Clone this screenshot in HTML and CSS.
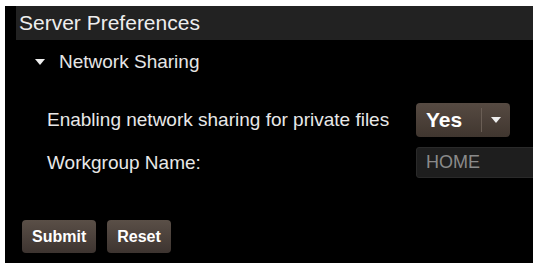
FILE: index.html
```html
<!DOCTYPE html>
<html lang="en">
<head>
  <meta charset="UTF-8">
  <meta name="viewport" content="width=device-width, initial-scale=1.0">
  <title>Server Preferences</title>
  <link rel="stylesheet" href="styles.css">
</head>
<body>
  <div class="panel">
    <div class="panel-title">Server Preferences</div>
    <div class="section-title">
      <span class="caret"></span>
      <span>Network Sharing</span>
    </div>
    <form class="prefs" id="prefsForm">
      <label class="field-label">Enabling network sharing for private files</label>
      <div class="dropdown">
        <span class="dropdown-value">Yes</span>
        <span class="dropdown-arrow"><span class="caret small"></span></span>
      </div>
      <label class="field-label" for="workgroup">Workgroup Name:</label>
      <input type="text" id="workgroup" class="text-input" placeholder="HOME">
    </form>
    <div class="actions">
      <button type="button" class="btn">Submit</button>
      <button type="button" class="btn">Reset</button>
    </div>
  </div>
</body>
</html>
```

FILE: styles.css
```css
body {
  margin: 0;
  background: #fff;
  font-family: "Liberation Sans", Arial, sans-serif;
}

.panel {
  width: 528px;
  height: 257px;
  margin: 6px 0 0 5px;
  background: #000;
  overflow: hidden;
  box-sizing: border-box;
}

.panel-title {
  margin-left: 11px;
  height: 34px;
  line-height: 34px;
  padding-left: 3px;
  background: #222;
  color: #eee;
  font-size: 21px;
}

.section-title {
  display: flex;
  align-items: center;
  height: 44px;
  padding-left: 30px;
  color: #e6e6e6;
  font-size: 19px;
}

.caret {
  display: inline-block;
  width: 0;
  height: 0;
  border-left: 5px solid transparent;
  border-right: 5px solid transparent;
  border-top: 6px solid #eee;
  margin-right: 14px;
}

.caret.small {
  margin: 0;
}

.prefs {
  display: grid;
  grid-template-columns: 369px 160px;
  grid-template-rows: 34px 31px;
  row-gap: 10px;
  align-items: center;
  margin: 19px 0 0 0;
  padding-left: 42px;
}

.field-label {
  color: #e8e8e8;
  font-size: 19px;
}

.dropdown {
  display: flex;
  align-items: center;
  width: 94px;
  height: 34px;
  border-radius: 4px;
  background: linear-gradient(#564a42, #40362f);
  box-sizing: border-box;
}

.dropdown-value {
  width: 66px;
  padding-left: 10px;
  box-sizing: border-box;
  color: #fff;
  font-weight: bold;
  font-size: 21px;
  border-right: 1px solid #6a5e55;
  line-height: 24px;
}

.dropdown-arrow {
  display: flex;
  justify-content: center;
  flex: 1;
}

.text-input {
  width: 160px;
  height: 31px;
  box-sizing: border-box;
  background: #1e1e1e;
  border: 1px solid #2a2a2a;
  border-radius: 3px 0 0 3px;
  padding: 0 9px;
  color: #ccc;
  font-family: "Liberation Sans", Arial, sans-serif;
  font-size: 18px;
}

.text-input::placeholder {
  color: #8a8a8a;
}

.actions {
  display: flex;
  gap: 11px;
  margin-top: 42px;
  padding-left: 17px;
}

.btn {
  height: 33px;
  padding: 0 10px;
  border: none;
  border-radius: 4px;
  background: linear-gradient(#5a4f47, #3d3430);
  color: #fff;
  font-family: "Liberation Sans", Arial, sans-serif;
  font-weight: bold;
  font-size: 16px;
  cursor: pointer;
}
```
